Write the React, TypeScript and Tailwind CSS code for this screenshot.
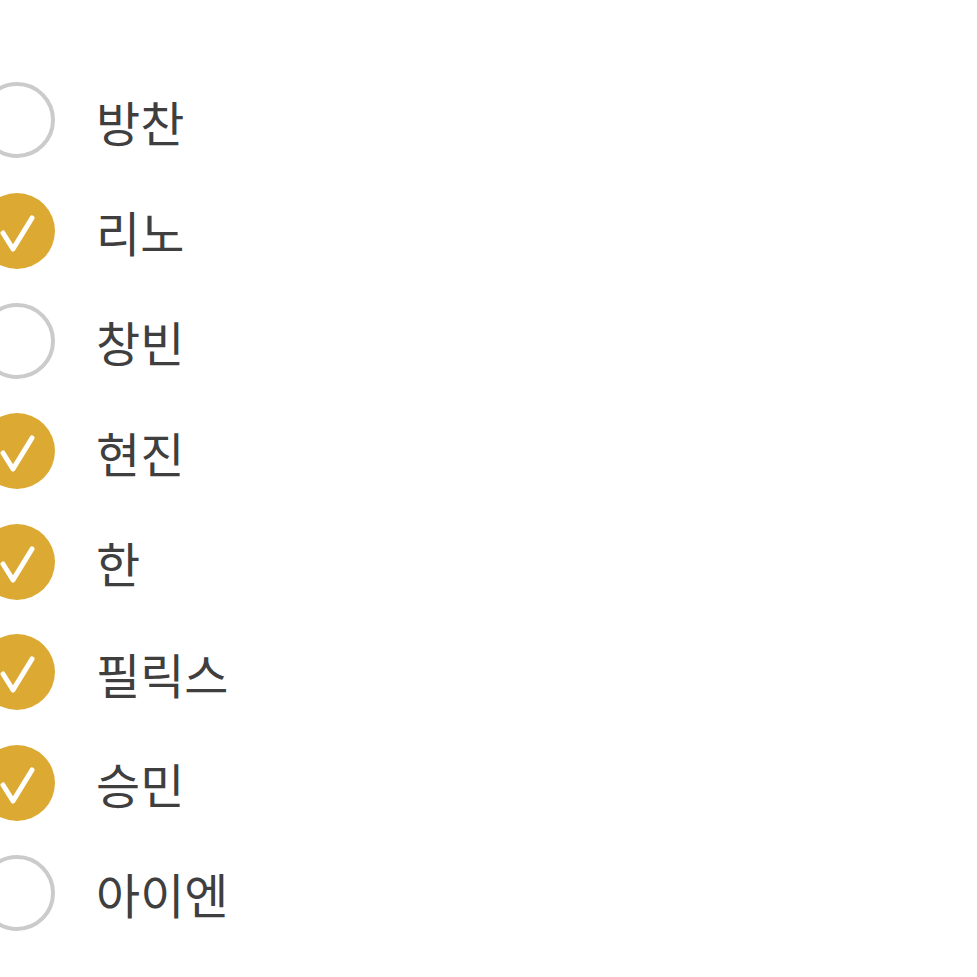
import { useState } from "react";

const members = [
  { name: "방찬", checked: false },
  { name: "리노", checked: true },
  { name: "창빈", checked: false },
  { name: "현진", checked: true },
  { name: "한", checked: true },
  { name: "필릭스", checked: true },
  { name: "승민", checked: true },
  { name: "아이엔", checked: false },
];

export default function App() {
  const [items, setItems] = useState(members);

  const toggle = (i: number) => {
    setItems(items.map((m, j) => (j === i ? { ...m, checked: !m.checked } : m)));
  };

  return (
    <div
      className="w-[977px] h-[977px] bg-white overflow-hidden pt-[65px]"
      style={{ fontFamily: '"Noto Sans CJK KR", "Noto Sans", sans-serif' }}
    >
      {items.map((m, i) => (
        <div
          key={i}
          onClick={() => toggle(i)}
          className="h-[110.4px] flex items-center gap-[41px] cursor-pointer"
        >
          {m.checked ? (
            <div className="w-[76px] h-[76px] -ml-[21px] rounded-full bg-[#dcaa33] flex items-center justify-center shrink-0">
              <svg width="76" height="76" viewBox="0 0 76 76">
                <path
                  d="M24 40 L34 56 L53 25"
                  fill="none"
                  stroke="#ffffff"
                  strokeWidth="5"
                  strokeLinecap="round"
                  strokeLinejoin="round"
                />
              </svg>
            </div>
          ) : (
            <div className="w-[76px] h-[76px] -ml-[21px] rounded-full border-[4px] border-[#cbcbcb] shrink-0" />
          )}
          <span className="text-[48px] leading-none text-[#3f3f3f] mt-[1px]">{m.name}</span>
        </div>
      ))}
    </div>
  );
}
